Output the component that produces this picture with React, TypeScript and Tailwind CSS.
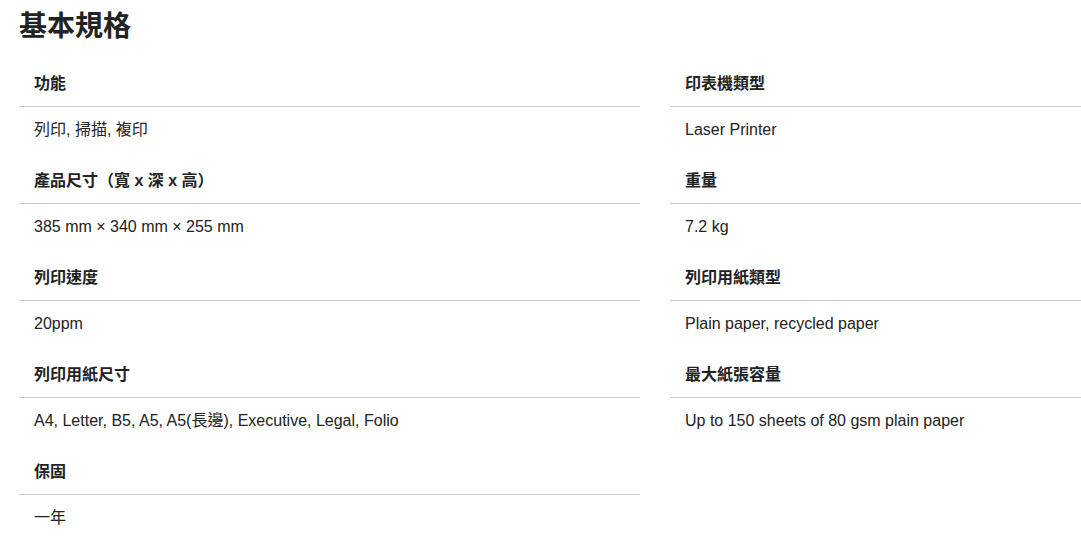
import React from "react";

type Spec = { label: string; value: string };

const left: Spec[] = [
  { label: "功能", value: "列印, 掃描, 複印" },
  { label: "產品尺寸（寬 x 深 x 高）", value: "385 mm × 340 mm × 255 mm" },
  { label: "列印速度", value: "20ppm" },
  { label: "列印用紙尺寸", value: "A4, Letter, B5, A5, A5(長邊), Executive, Legal, Folio" },
  { label: "保固", value: "一年" },
];

const right: Spec[] = [
  { label: "印表機類型", value: "Laser Printer" },
  { label: "重量", value: "7.2 kg" },
  { label: "列印用紙類型", value: "Plain paper, recycled paper" },
  { label: "最大紙張容量", value: "Up to 150 sheets of 80 gsm plain paper" },
];

function Item({ s }: { s: Spec }) {
  return (
    <div>
      <div className="border-b border-[#cccccc] px-[15px] pt-[16px] pb-[11px] text-[16px] leading-[22px] font-bold text-[#222222]">
        {s.label}
      </div>
      <div className="px-[15px] pt-[12px] pb-[13px] text-[16px] leading-[22px] text-[#222222]">
        {s.value}
      </div>
    </div>
  );
}

export default function App() {
  return (
    <div
      className="h-[540px] w-full overflow-hidden bg-white pl-[19px]"
      style={{ fontFamily: '"Liberation Sans", Arial, "Noto Sans CJK TC", sans-serif' }}
    >
      <h1 className="mt-[10px] mb-[13px] text-[28px] leading-[34px] font-bold text-[#222222]">基本規格</h1>
      <div className="flex gap-[30px]">
        <div className="w-[621px] shrink-0">
          {left.map((s) => (
            <Item key={s.label} s={s} />
          ))}
        </div>
        <div className="flex-1">
          {right.map((s) => (
            <Item key={s.label} s={s} />
          ))}
        </div>
      </div>
    </div>
  );
}
